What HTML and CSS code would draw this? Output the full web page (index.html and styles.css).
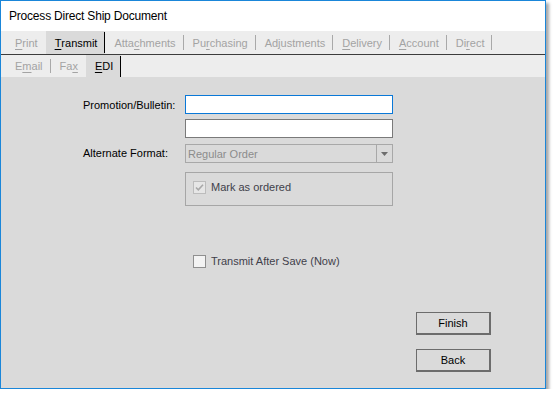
FILE: index.html
```html
<!DOCTYPE html>
<html>
<head>
<meta charset="utf-8">
<link rel="stylesheet" href="styles.css">
</head>
<body>
<div class="window">
  <div class="titlebar">Process Direct Ship Document</div>
  <div class="tabs tabs-main">
    <span class="tab nosep"><u>P</u>rint</span>
    <span class="tab active"><u>T</u>ransmit</span>
    <span class="tab">Atta<u>c</u>hments</span>
    <span class="tab">Pu<u>r</u>chasing</span>
    <span class="tab">Ad<u>j</u>ustments</span>
    <span class="tab"><u>D</u>elivery</span>
    <span class="tab"><u>A</u>ccount</span>
    <span class="tab">Di<u>r</u>ect</span>
  </div>
  <div class="tabs tabs-sub">
    <span class="tab">E<u>m</u>ail</span>
    <span class="tab nosep">Fa<u>x</u></span>
    <span class="tab active"><u>E</u>DI</span>
  </div>
  <div class="content">
    <div class="form">
      <label class="lbl">Promotion/Bulletin:</label>
      <div class="field focused"></div>
      <span></span>
      <div class="field"></div>
      <label class="lbl">Alternate Format:</label>
      <div class="select">
        <span class="select-text">Regular Order</span>
        <span class="select-btn"><svg width="7" height="4" viewBox="0 0 7 4"><path d="M0 0H7L3.5 4Z" fill="#6d6d6d"/></svg></span>
      </div>
      <span></span>
      <div class="group">
        <span class="check disabled"><svg width="11" height="11" viewBox="0 0 11 11"><path d="M2 5.5L4.3 7.8L9 2.8" stroke="#a8a8a8" stroke-width="1.6" fill="none"/></svg></span>
        <span class="check-label">Mark as ordered</span>
      </div>
    </div>
    <div class="transmit-row">
      <span class="check"></span>
      <span class="check-label">Transmit After Save (Now)</span>
    </div>
    <div class="buttons">
      <button class="btn">Finish</button>
      <button class="btn">Back</button>
    </div>
  </div>
</div>
</body>
</html>
```
FILE: styles.css
```css
html, body {
  margin: 0;
  padding: 0;
  background: #ffffff;
}
body {
  font-family: "Liberation Sans", Arial, sans-serif;
  font-size: 11px;
}
.window {
  box-sizing: border-box;
  width: 546px;
  height: 389px;
  border: 1px solid #1a86d9;
  background: #dadada;
  box-shadow: 3px 3px 3px rgba(0, 0, 0, 0.35);
  display: flex;
  flex-direction: column;
}
.titlebar {
  height: 30px;
  background: #ffffff;
  font-family: "Liberation Sans", Arial, sans-serif;
  font-size: 12px;
  letter-spacing: -0.2px;
  color: #000;
  padding-left: 8px;
  line-height: 30px;
}
.tabs {
  display: flex;
  background: #ededed;
  padding-left: 5px;
}
.tabs-main {
  height: 23px;
  border-bottom: 1px solid #3c3c3c;
}
.tabs-sub {
  height: 22px;
}
.tab {
  position: relative;
  display: flex;
  align-items: center;
  padding: 0 8px 0 9px;
  color: #a3a3a3;
}
.tab u {
  text-decoration-thickness: 1px;
  text-underline-offset: 2px;
}
.tab::after {
  content: "";
  position: absolute;
  right: 0;
  top: 4px;
  bottom: 4px;
  width: 1px;
  background: #a9a9a9;
}
.tab.nosep::after {
  display: none;
}
.tab.active {
  background: #dadada;
  color: #000;
}
.tab.active::after {
  top: 1px;
  bottom: 1px;
  background: #000;
}
.tabs-sub .tab.active::after {
  top: 1px;
  bottom: 0;
}
.content {
  flex: 1;
  padding: 18px 0 0 82px;
  display: flex;
  flex-direction: column;
}
.form {
  display: grid;
  grid-template-columns: 102px 208px;
  grid-auto-rows: auto;
  row-gap: 5px;
  align-items: center;
}
.lbl {
  color: #000;
}
.field {
  box-sizing: border-box;
  height: 19px;
  background: #fff;
  border: 1px solid #7a7a7a;
}
.field.focused {
  border-color: #0a78d7;
}
.select {
  box-sizing: border-box;
  height: 19px;
  border: 1px solid #a8a8a8;
  display: flex;
  align-items: center;
  margin-top: 1px;
}
.select-text {
  flex: 1;
  color: #8c8c8c;
  padding-left: 2px;
}
.select-btn {
  align-self: stretch;
  width: 15px;
  border-left: 1px solid #a8a8a8;
  display: flex;
  align-items: center;
  justify-content: center;
}
.group {
  box-sizing: border-box;
  height: 34px;
  margin-top: 4px;
  border: 1px solid #a6a6a6;
  display: flex;
  align-items: flex-start;
  padding: 8px 0 0 7px;
}
.check {
  box-sizing: border-box;
  width: 13px;
  height: 13px;
  border: 1px solid #8f8f8f;
  background: #f3f3f3;
  display: flex;
  align-items: center;
  justify-content: center;
  flex: none;
}
.check.disabled {
  border-color: #bcbcbc;
  background: #e6e6e6;
}
.check-label {
  margin-left: 5px;
  color: #3f3f4a;
  line-height: 13px;
}
.transmit-row {
  display: flex;
  align-items: center;
  margin: 49px 0 0 110px;
}
.buttons {
  display: flex;
  flex-direction: column;
  gap: 14px;
  margin: 44px 0 0 333px;
}
.btn {
  box-sizing: border-box;
  width: 75px;
  height: 23px;
  background: #dadada;
  border-style: solid;
  border-color: #6c6c6c;
  border-width: 1px 2px 2px 1px;
  font-family: "Liberation Sans", Arial, sans-serif;
  font-size: 11px;
  color: #000;
  padding: 0;
}
```
